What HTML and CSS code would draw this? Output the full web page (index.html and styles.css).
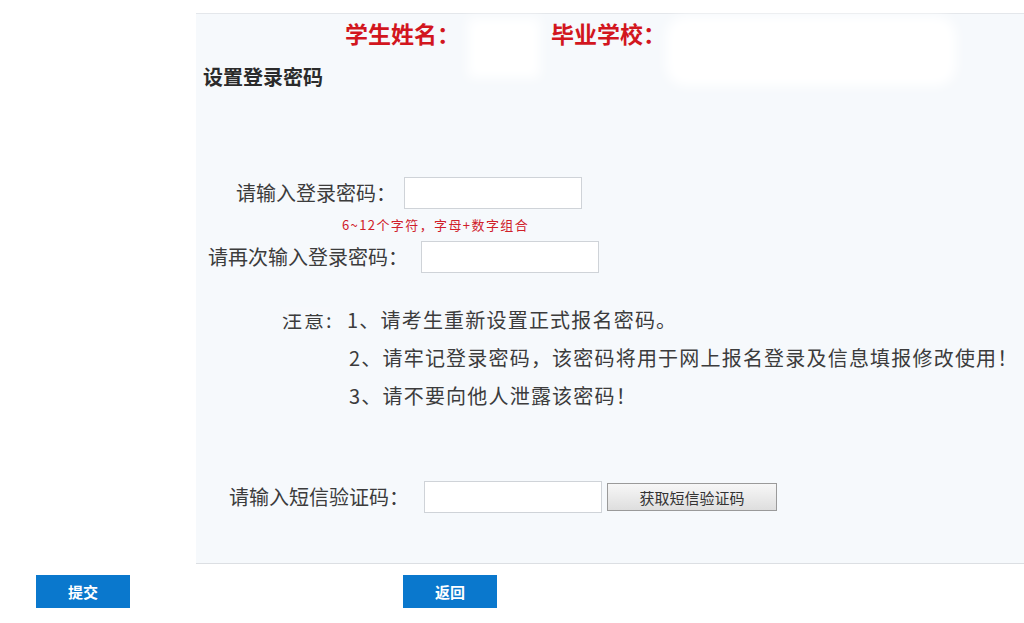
FILE: index.html
```html
<!DOCTYPE html>
<html>
<head>
  <meta charset="utf-8">
  <link rel="stylesheet" href="styles.css">
</head>
<body>
  <div class="panel">
    <div class="student-bar">
      <span class="field">学生姓名：</span>
      <span class="field school">毕业学校：</span>
    </div>
    <div class="blot blot-name"></div>
    <div class="blot blot-school"></div>

    <div class="title">设置登录密码</div>

    <div class="row row-pwd">
      <label>请输入登录密码：</label>
      <input type="password" class="text-input">
    </div>
    <div class="hint">6~12个字符，字母+数字组合</div>
    <div class="row row-pwd2">
      <label>请再次输入登录密码：</label>
      <input type="password" class="text-input">
    </div>

    <div class="notes">
      <div class="notes-head">注意:<span class="notes-mask"></span></div>
      <ul class="notes-list">
        <li class="first">1、请考生重新设置正式报名密码。</li>
        <li>2、请牢记登录密码，该密码将用于网上报名登录及信息填报修改使用！</li>
        <li>3、请不要向他人泄露该密码！</li>
      </ul>
    </div>

    <div class="row row-sms">
      <label>请输入短信验证码：</label>
      <input type="text" class="text-input">
      <button class="btn-sms">获取短信验证码</button>
    </div>
  </div>

  <div class="actions">
    <button class="btn-blue btn-submit">提交</button>
    <button class="btn-blue btn-back">返回</button>
  </div>
</body>
</html>
```

FILE: styles.css
```css
* {
  margin: 0;
  padding: 0;
  box-sizing: border-box;
}

body {
  background: #fff;
  font-family: "Noto Sans CJK SC", "Noto Sans", sans-serif;
  color: #3a3a3a;
  overflow: hidden;
}

.panel {
  position: relative;
  margin: 13px 0 0 196px;
  height: 551px;
  background: #f6f9fc;
  border-top: 1px solid #e4e7eb;
  border-bottom: 1px solid #dcdfe3;
}

.student-bar {
  display: flex;
  padding-left: 149px;
  height: 38px;
  align-items: center;
}

.field {
  font-size: 23px;
  font-weight: bold;
  color: #d2161e;
  line-height: 1;
}

.field.school {
  margin-left: 91px;
}

/* redacted areas */
.blot {
  position: absolute;
  background: #fff;
  filter: blur(6px);
}

.blot-name {
  left: 272px;
  top: 4px;
  width: 72px;
  height: 60px;
}

.blot-school {
  left: 470px;
  top: 2px;
  width: 290px;
  height: 70px;
  border-radius: 20px;
}

.title {
  position: relative;
  padding-left: 7px;
  margin-top: 12px;
  font-size: 20px;
  font-weight: bold;
  color: #2b2b2b;
  line-height: 26px;
}

.row {
  display: flex;
  align-items: center;
}

.row label {
  font-size: 20px;
  line-height: 32px;
  color: #3c3c3c;
}

.text-input {
  width: 178px;
  height: 32px;
  border: 1px solid #cfd3d8;
  background: #fff;
  outline: none;
}

.row-pwd {
  margin-top: 87px;
  padding-left: 40px;
}

.row-pwd label {
  margin-right: 8px;
}

.hint {
  margin: 8px 0 0 146px;
  font-size: 13px;
  line-height: 16px;
  color: #d0202a;
  letter-spacing: 1.4px;
}

.row-pwd2 {
  margin-top: 8px;
  padding-left: 12px;
}

.row-pwd2 label {
  margin-right: 13px;
}

.notes {
  display: flex;
  margin-top: 28px;
  padding-left: 86px;
}

.notes-head {
  position: relative;
  width: 65px;
  font-size: 20px;
  line-height: 38px;
  color: #3c3c3c;
  letter-spacing: 2px;
}

/* the top of this label is cut off in the original */
.notes-mask {
  position: absolute;
  left: 0;
  top: 6px;
  width: 48px;
  height: 7px;
  background: #f7f9fc;
}

.notes-list {
  list-style: none;
  font-size: 20px;
  line-height: 38px;
  color: #3c3c3c;
  letter-spacing: 1.2px;
  white-space: nowrap;
}

.notes-list li {
  margin-left: 2px;
}

.notes-list li.first {
  margin-left: 0;
}

.row-sms {
  margin-top: 66px;
  padding-left: 33px;
}

.row-sms label {
  margin-right: 15px;
}

.btn-sms {
  margin-left: 5px;
  width: 170px;
  height: 28px;
  border: 1px solid #9a9a9a;
  background: linear-gradient(#f7f7f7, #dedede);
  font-family: "Noto Sans CJK SC", sans-serif;
  font-size: 15px;
  color: #333;
}

.actions {
  display: flex;
  padding: 11px 0 0 36px;
}

.btn-blue {
  width: 94px;
  height: 33px;
  border: none;
  background: #0a78cd;
  color: #fff;
  font-family: "Noto Sans CJK SC", sans-serif;
  font-size: 15px;
  font-weight: bold;
}

.btn-back {
  margin-left: 273px;
}
```
